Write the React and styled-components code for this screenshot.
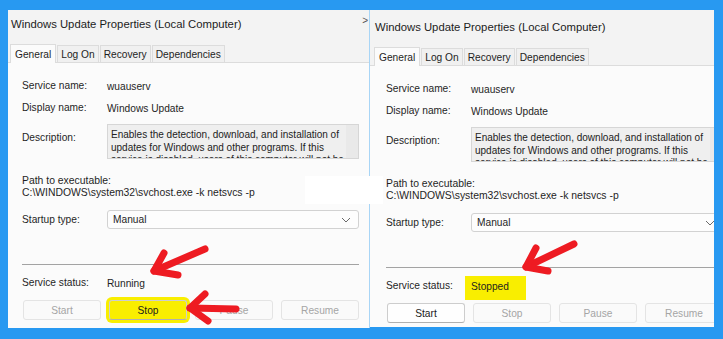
import React from 'react'
import styled, { createGlobalStyle } from 'styled-components'

const GlobalStyle = createGlobalStyle`
  html, body {
    margin: 0;
    padding: 0;
    background: #2899f1;
  }
  body {
    font-family: "Liberation Sans", Arial, sans-serif;
  }
`

const Stage = styled.div`
  position: relative;
  width: 723px;
  height: 339px;
  overflow: hidden;
  box-sizing: border-box;
  background: #2899f1;
  padding: 10px 0 0 8px;
  display: flex;
  align-items: flex-start;
`

const Window = styled.div`
  width: ${p => p.$width}px;
  height: ${p => p.$height}px;
  flex: none;
  box-sizing: border-box;
  background: #fbfbfb;
  display: flex;
  flex-direction: column;
  overflow: hidden;
  border-right: ${p => (p.$edge ? '1px solid #a8d5f6' : 'none')};
`

const Header = styled.div`
  background: #f3f3f3;
  padding-top: ${p => p.$shift}px;
`

const TitleBar = styled.div`
  height: 27px;
  display: flex;
  align-items: center;
  justify-content: space-between;
  padding: 0 1px 0 ${p => p.$inset}px;
  font-size: 11.3px;
  color: #1c1c1c;
  white-space: nowrap;
`

const Caret = styled.span`
  font-size: 10px;
  color: #555;
  margin-top: -6px;
`

const TabStrip = styled.div`
  margin-top: 7px;
  height: 18px;
  display: flex;
  align-items: flex-end;
  padding-left: ${p => p.$inset}px;
  border-bottom: 1px solid #dcdcdc;
`

const Tab = styled.div`
  height: ${p => (p.$active ? 19 : 17)}px;
  margin-bottom: ${p => (p.$active ? -1 : 0)}px;
  box-sizing: border-box;
  padding: 0 ${p => (p.$active ? 4 : 3)}px;
  display: flex;
  align-items: center;
  border: 1px solid #dcdcdc;
  border-bottom: none;
  margin-left: ${p => (p.$active ? -1 : 1)}px;
  background: ${p => (p.$active ? '#fbfbfb' : '#f0f0f0')};
  font-size: 10.2px;
  color: #1e1e1e;
`

const Content = styled.div`
  padding: 12px 0 0 ${p => p.$inset}px;
  width: 337px;
  font-size: 10.2px;
  color: #1f1f1f;
`

const Row = styled.div`
  height: 22px;
  display: flex;
  align-items: center;
  white-space: nowrap;
`

const Label = styled.div`
  width: 85px;
  flex: none;
  padding-top: ${p => p.$top || 0}px;
  line-height: 14px;
`

const DescRow = styled.div`
  margin-top: 5px;
  display: flex;
  align-items: flex-start;
`

const DescBox = styled.div`
  position: relative;
  width: 252px;
  height: 35px;
  box-sizing: border-box;
  background: #efefef;
  border: 1px solid #d6d6d6;
  padding: 4px 14px 0 3px;
  font-size: 10px;
  line-height: 12.7px;
  white-space: nowrap;
  overflow: hidden;
  color: #222;
`

const ScrollTrack = styled.div`
  position: absolute;
  top: 0;
  right: 0;
  bottom: 0;
  width: 12px;
  background: #e9e9e9;
`

const PathBlock = styled.div`
  margin-top: 16px;
  line-height: 12px;
  white-space: nowrap;
  font-size: 10.4px;
`

const StartupRow = styled.div`
  margin-top: 11px;
  height: 19px;
  display: flex;
  align-items: center;
`

const Select = styled.div`
  width: 252px;
  height: 19px;
  box-sizing: border-box;
  border: 1px solid #d2d2d2;
  border-radius: 3px;
  background: #fdfdfd;
  display: flex;
  align-items: center;
  justify-content: space-between;
  padding: 0 7px 0 5px;
`

const Separator = styled.div`
  margin-top: 35px;
  height: 1px;
  background: #a3a3a3;
`

const StatusRow = styled(Row)`
  margin-top: 7px;
`

const StatusValue = styled.span`
  display: inline-flex;
  align-items: flex-start;
  box-sizing: border-box;
  ${p => p.$mark && `
    height: 24px;
    padding: 5px 17px 0 6px;
    margin: 4px 0 0 -6px;
    background: #f9ee00;
  `}
`

const ButtonRow = styled.div`
  margin-top: 6px;
  display: flex;
  gap: 8px;
  padding-left: 1px;
`

const Button = styled.div`
  width: 78px;
  height: 20px;
  flex: none;
  box-sizing: border-box;
  border-radius: 3px;
  display: flex;
  align-items: center;
  justify-content: center;
  font-size: 10.2px;
  border: 1px solid ${p => (p.$enabled ? '#cdcdcd' : '#e4e4e4')};
  border-bottom-color: ${p => (p.$enabled ? '#b0b0b0' : '#e4e4e4')};
  color: ${p => (p.$enabled ? '#1b1b1b' : '#a5a5a5')};
  background: ${p => (p.$mark ? '#f9ee00' : p.$enabled ? '#fefefe' : '#fafafa')};
  box-shadow: ${p => (p.$mark ? '0 0 0 3px #f9ee00' : 'none')};
`

const Overlay = styled.svg`
  position: absolute;
  left: 0;
  top: 0;
  pointer-events: none;
`

const Patch = styled.div`
  position: absolute;
  left: 305px;
  top: 176px;
  width: 78px;
  height: 28px;
  background: #ffffff;
`

const Chevron = () => (
  <svg width="10" height="6" viewBox="0 0 10 6">
    <polyline points="1,1 5,5 9,1" fill="none" stroke="#6a6a6a" strokeWidth="1" />
  </svg>
)

const Dialog = ({ width, height, edge, shift, inset, status, markStop, markStatus, caret }) => (
  <Window $width={width} $height={height} $edge={edge}>
    <Header $shift={shift}>
      <TitleBar $inset={inset + 1}>
        <span>Windows Update Properties (Local Computer)</span>
        {caret && <Caret>&gt;</Caret>}
      </TitleBar>
      <TabStrip $inset={inset + 1}>
        <Tab $active>General</Tab>
        <Tab>Log On</Tab>
        <Tab>Recovery</Tab>
        <Tab>Dependencies</Tab>
      </TabStrip>
    </Header>
    <Content $inset={inset + 12}>
      <Row>
        <Label>Service name:</Label>
        <span>wuauserv</span>
      </Row>
      <Row>
        <Label>Display name:</Label>
        <span>Windows Update</span>
      </Row>
      <DescRow>
        <Label $top={7}>Description:</Label>
        <DescBox>
          Enables the detection, download, and installation of
          <br />
          updates for Windows and other programs. If this
          <br />
          service is disabled, users of this computer will not be
          <ScrollTrack />
        </DescBox>
      </DescRow>
      <PathBlock>
        <div>Path to executable:</div>
        <div>{'C:\\WINDOWS\\system32\\svchost.exe -k netsvcs -p'}</div>
      </PathBlock>
      <StartupRow>
        <Label>Startup type:</Label>
        <Select>
          <span>Manual</span>
          <Chevron />
        </Select>
      </StartupRow>
      <Separator />
      <StatusRow>
        <Label>Service status:</Label>
        <StatusValue $mark={markStatus}>{status}</StatusValue>
      </StatusRow>
      <ButtonRow>
        <Button $enabled={status === 'Stopped'}>Start</Button>
        <Button $enabled={status === 'Running'} $mark={markStop}>Stop</Button>
        <Button>Pause</Button>
        <Button>Resume</Button>
      </ButtonRow>
    </Content>
  </Window>
)

const Arrow = ({ tip, tail, armA, armB }) => (
  <g stroke="#ee1b22" strokeWidth="7" strokeLinecap="round" strokeLinejoin="round" fill="none">
    <line x1={tail[0]} y1={tail[1]} x2={tip[0]} y2={tip[1]} />
    <polyline points={`${armA[0]},${armA[1]} ${tip[0]},${tip[1]} ${armB[0]},${armB[1]}`} />
  </g>
)

const App = () => (
  <>
    <GlobalStyle />
    <Stage>
      <Dialog width={362} height={318} edge shift={0} inset={2} status="Running" markStop caret />
      <Dialog width={344} height={317} shift={3} inset={4} status="Stopped" markStatus />
      <Patch />
      <Overlay width="723" height="339" viewBox="0 0 723 339">
        <Arrow tip={[154, 271]} tail={[205, 249]} armA={[164, 253]} armB={[178, 275]} />
        <Arrow tip={[190, 308]} tail={[236, 309]} armA={[205, 294]} armB={[208, 321]} />
        <Arrow tip={[526, 267]} tail={[574, 244]} armA={[536, 248]} armB={[548, 271]} />
      </Overlay>
    </Stage>
  </>
)

export default App
